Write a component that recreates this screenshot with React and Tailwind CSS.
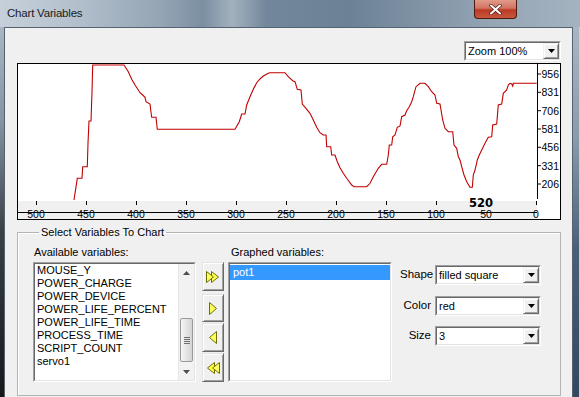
import React from "react";

const P = [
  [74,200],[77.3,178.3],[82,178.3],[82.7,166.7],[87.3,166.7],[88,143.3],[89,121],[91,121],[92,91.7],[92.7,65],[124,65],[128.3,71.7],[131.7,79.3],[135,85],[138.3,90],[140,92.7],[142.7,95],[145,97.3],[146,101.7],[150,104],[150.7,110],[151.7,117.3],[156,117.3],[157.3,129.3],
  [235,129.3],[239.3,121.7],[241.7,114],[245,114],[246.7,105],[250,96.7],[253.3,89.3],[256.7,82.7],[260,79],[263.3,76],[268.3,73.3],[270,72.7],[285,72.7],[288.3,76.7],[292.7,80.7],[295,81.7],[297.3,89.3],[301,90],[302.3,104],[306,108.3],[310,113.3],[313.3,120],[316.7,127.3],[320,132.7],[323.3,135],[326,135],[326.7,146.7],[330.7,146.7],[331.7,155],[335,155],[337.3,161.7],[340,167.7],[343.3,173.3],[346.7,178.3],[351.7,185],[354,186.7],[366.7,186.7],[370,183.3],[373.3,176.7],[378.3,168.3],[381.7,164.3],[386.7,164.3],[388.3,155],[389.3,145],[391.7,145],[392.7,136.7],[395,135],[397.3,127.3],[400,126],[401.7,116.7],[405,115],[406.7,110.7],[409.3,106.7],[411.7,101.7],[413.3,96.7],[416,86.7],[420,83.3],[425,83.3],[428.3,86.7],[431.7,91.7],[435,95],[436.7,103.3],[440,104],
  [442.7,120],[445,128.3],[448.3,131.7],[452.7,131.7],[454,145],[456.7,148.3],[458.3,156.7],[460,160],[461.7,166.7],[464,175],[466.7,181.7],[470,187.3],[472.3,187.3],[473.3,175],[475,170],[476,166],[477.3,160],[479.3,155],[481.7,150],[485,143.3],[488.3,137.3],[491.7,136.7],[492.7,125],[496.7,124],[498.3,105],[501.7,104],[503.3,93.3],[506.7,90],[508.3,85],[510,83.3],[511.7,84],[512.7,86],[513.3,83.3],[536.7,83.3]
].map((p) => p.join(",")).join(" ");

const YL = [[956,74],[831,92.3],[706,110.7],[581,129],[456,147.3],[331,165.7],[206,184]];
const XL = [500,450,400,350,300,250,200,150,100,50,0];

const AVAIL = ["MOUSE_Y","POWER_CHARGE","POWER_DEVICE","POWER_LIFE_PERCENT","POWER_LIFE_TIME","PROCESS_TIME","SCRIPT_COUNT","servo1"];

function Chart() {
  return (
    <div className="ml-[12px] mt-[2px] w-[544px] h-[157px] border border-black bg-white">
      <svg width="542" height="155" viewBox="18 64 542 155" className="block">
        <rect x="18" y="64" width="542" height="155" fill="#fff" />
        <rect x="18" y="201" width="519" height="18" fill="#f0f0f0" />
        <polyline points={P} fill="none" stroke="#c00000" strokeWidth="1.1" />
        <line x1="537.5" y1="64" x2="537.5" y2="199" stroke="#000" />
        <line x1="536.5" y1="202" x2="536.5" y2="205" stroke="#000" />
        {YL.map(([v, y]) => (
          <g key={v}>
            <line x1="537.5" y1={y} x2="541" y2={y} stroke="#000" />
            <text x="541.5" y={y + 4} fontSize="10.5" fontFamily="Liberation Sans, Arial, sans-serif" fill="#000">{v}</text>
          </g>
        ))}
        {XL.map((v) => (
          <g key={v}>
            <line x1={536.5 - v} y1="201" x2={536.5 - v} y2="205" stroke="#000" />
            <text x={536 - v} y="218" fontSize="10.5" textAnchor="middle" fontFamily="Liberation Sans, Arial, sans-serif" fill="#000">{v}</text>
          </g>
        ))}
        <line x1="18" y1="212.5" x2="537" y2="212.5" stroke="#000" />
        <text x="481" y="206.5" fontSize="11.5" fontWeight="bold" textAnchor="middle" fontFamily="DejaVu Sans, Arial, sans-serif" fill="#000">520</text>
      </svg>
    </div>
  );
}

function DownArrow() {
  return (
    <svg width="7" height="4" viewBox="0 0 7 4"><path d="M0 0H7L3.5 4Z" fill="#000" /></svg>
  );
}

function Combo({ text, className }) {
  return (
    <div className={"flex h-[20px] border border-t-[#a0a0a0] border-l-[#a0a0a0] border-b-white border-r-white " + className}>
      <div className="flex flex-1 border border-t-[#696969] border-l-[#696969] border-b-[#e3e3e3] border-r-[#e3e3e3] bg-white">
        <div className="flex-1 pl-[2px] text-[11px] leading-[16px] text-black">{text}</div>
        <div className="w-[16px] h-[16px] flex items-center justify-center bg-[#f0f0f0] border border-t-[#f0f0f0] border-l-[#f0f0f0] border-b-[#696969] border-r-[#696969] shadow-[inset_1px_1px_0_#ffffff,inset_-1px_-1px_0_#a0a0a0]">
          <DownArrow />
        </div>
      </div>
    </div>
  );
}

function ArrowBtn({ h, mt, children }) {
  return (
    <div className={"w-[22px] flex items-center justify-center bg-[#f0f0f0] border border-t-[#e3e3e3] border-l-[#e3e3e3] border-b-[#696969] border-r-[#696969] shadow-[inset_1px_1px_0_#ffffff,inset_-1px_-1px_0_#a0a0a0] " + h + " " + mt}>
      {children}
    </div>
  );
}

const Y = "#ffff5a";
const O = "#6e6e00";

function Scrollbar() {
  return (
    <div className="w-[16px] flex flex-col bg-[#f2f2f2] border-l border-[#e6e6e6]">
      <div className="h-[17px] flex items-center justify-center">
        <svg width="7" height="4" viewBox="0 0 7 4"><path d="M0 4L3.5 0L7 4Z" fill="#4d4d4d" /></svg>
      </div>
      <div className="h-[37px]" />
      <div className="h-[44px] mx-[1px] rounded-[2px] border border-[#9a9a9a] bg-[linear-gradient(90deg,#f5f5f5,#e4e4e4_50%,#d4d4d4)] flex flex-col items-center justify-center gap-[1px]">
        <div className="w-[6px] h-[1px] bg-[#707070]" />
        <div className="w-[6px] h-[1px] bg-[#707070]" />
        <div className="w-[6px] h-[1px] bg-[#707070]" />
        <div className="w-[6px] h-[1px] bg-[#707070]" />
      </div>
      <div className="h-[1px]" />
      <div className="h-[17px] flex items-center justify-center">
        <svg width="7" height="4" viewBox="0 0 7 4"><path d="M0 0L3.5 4L7 0Z" fill="#4d4d4d" /></svg>
      </div>
    </div>
  );
}

export default function App() {
  return (
    <div className="w-[580px] h-[397px] overflow-hidden flex flex-col bg-[#8d9eaf] font-['Liberation_Sans',Arial,sans-serif] text-[11px] text-black">
      <div className="h-[27px] flex items-center justify-between bg-[linear-gradient(90deg,#c6d0da_0%,#b5c2ce_12%,#93a4b4_28%,#7b8fa2_35%,#a3b1be_40%,#72879b_46%,#6c8196_60%,#7f92a4_72%,#95a5b4_85%,#a4b3c0_100%)]">
        <div className="ml-[7px] text-[11.5px] text-[#1b1b1b] tracking-[-0.2px]">Chart Variables</div>
        <div className="self-start mr-[63px] w-[43px] h-[19px] rounded-b-[4px] border border-t-0 border-[#4b1a12] bg-[linear-gradient(180deg,#e29a88_0%,#d27462_45%,#bb3a24_55%,#c9563f_100%)] flex items-center justify-center">
          <svg width="13" height="11" viewBox="0 0 13 11">
            <path d="M2 1.5L11 9.5M11 1.5L2 9.5" stroke="#5a1c12" strokeWidth="3.4" strokeLinecap="round" />
            <path d="M2 1.5L11 9.5M11 1.5L2 9.5" stroke="#ffffff" strokeWidth="2" strokeLinecap="round" />
          </svg>
        </div>
      </div>
      <div className="flex flex-1 min-h-0">
        <div className="w-[4px] bg-[linear-gradient(180deg,#a9b6c3_0%,#8595a5_25%,#3a4047_55%,#15181b_100%)]" />
        <div className="w-[569px] flex flex-col bg-[#f0f0f0] border-t border-l border-r border-[#55626f]">
          <div className="pt-[13px] pr-[11px] flex justify-end">
            <Combo text="Zoom 100%" className="w-[97px]" />
          </div>
          <Chart />
          <fieldset className="ml-[12px] mt-[6px] w-[544px] h-[170px] border border-[#b4b4b4] shadow-[inset_1px_1px_0_#ffffff] pl-[15px] pt-[7px]">
            <legend className="ml-[6px] px-[2px] leading-[13px]">Select Variables To Chart</legend>
            <div className="flex items-start">
              <div className="flex flex-col">
                <div className="h-[13px] leading-[13px] pl-[1px]">Available variables:</div>
                <div className="mt-[3px] w-[163px] h-[120px] border border-t-[#a0a0a0] border-l-[#a0a0a0] border-b-white border-r-white">
                  <div className="h-full flex border border-t-[#696969] border-l-[#696969] border-b-[#e3e3e3] border-r-[#e3e3e3] bg-white">
                    <div className="flex-1 pl-[2px] flex flex-col">
                      {AVAIL.map((a) => (
                        <div key={a} className="h-[13px] leading-[13px] whitespace-nowrap">{a}</div>
                      ))}
                    </div>
                    <Scrollbar />
                  </div>
                </div>
              </div>
              <div className="ml-[6px] pt-[16px] flex flex-col">
                <ArrowBtn h="h-[29px]" mt="mt-0">
                  <svg width="14" height="12" viewBox="0 0 14 12">
                    <path d="M5.5 0.5L12.5 6L5.5 11.5Z" fill={Y} stroke={O} strokeWidth="1" strokeLinejoin="round" />
                    <path d="M0.5 0.5L7.5 6L0.5 11.5Z" fill={Y} stroke={O} strokeWidth="1" strokeLinejoin="round" />
                  </svg>
                </ArrowBtn>
                <ArrowBtn h="h-[28px]" mt="mt-[3px]">
                  <svg width="8" height="13" viewBox="0 0 8 13">
                    <path d="M0.5 0.5L7.5 6.5L0.5 12.5Z" fill={Y} stroke={O} strokeWidth="1" strokeLinejoin="round" />
                  </svg>
                </ArrowBtn>
                <ArrowBtn h="h-[29px]" mt="mt-[1px]">
                  <svg width="8" height="13" viewBox="0 0 8 13">
                    <path d="M7.5 0.5L0.5 6.5L7.5 12.5Z" fill={Y} stroke={O} strokeWidth="1" strokeLinejoin="round" />
                  </svg>
                </ArrowBtn>
                <ArrowBtn h="h-[29px]" mt="mt-[1px]">
                  <svg width="14" height="12" viewBox="0 0 14 12">
                    <path d="M8.5 0.5L1.5 6L8.5 11.5Z" fill={Y} stroke={O} strokeWidth="1" strokeLinejoin="round" />
                    <path d="M13.5 0.5L6.5 6L13.5 11.5Z" fill={Y} stroke={O} strokeWidth="1" strokeLinejoin="round" />
                  </svg>
                </ArrowBtn>
              </div>
              <div className="ml-[4px] flex flex-col">
                <div className="h-[13px] leading-[13px] pl-[3px]">Graphed variables:</div>
                <div className="mt-[3px] w-[164px] h-[120px] border border-t-[#a0a0a0] border-l-[#a0a0a0] border-b-white border-r-white">
                  <div className="h-full border border-t-[#696969] border-l-[#696969] border-b-[#e3e3e3] border-r-[#e3e3e3] bg-white">
                    <div className="mt-[1px] h-[15px] leading-[15px] pl-[3px] bg-[#3399ff] text-white">pot1</div>
                  </div>
                </div>
              </div>
              <div className="ml-[8px] pt-[19px] grid grid-cols-[31px_106px] gap-x-[4px] items-center">
                <div className="text-right text-[11.5px]">Shape</div>
                <Combo text="filled square" className="w-[106px]" />
                <div className="text-right text-[11.5px] mt-[11px]">Color</div>
                <Combo text="red" className="w-[106px] mt-[11px]" />
                <div className="text-right text-[11.5px] mt-[10px]">Size</div>
                <Combo text="3" className="w-[106px] mt-[10px]" />
              </div>
            </div>
          </fieldset>
        </div>
        <div className="flex-1 bg-[linear-gradient(180deg,#a9b6c3_0%,#8a9bab_30%,#4a6078_60%,#33485f_100%)] border-r border-[#c8d0d8]" />
      </div>
    </div>
  );
}
